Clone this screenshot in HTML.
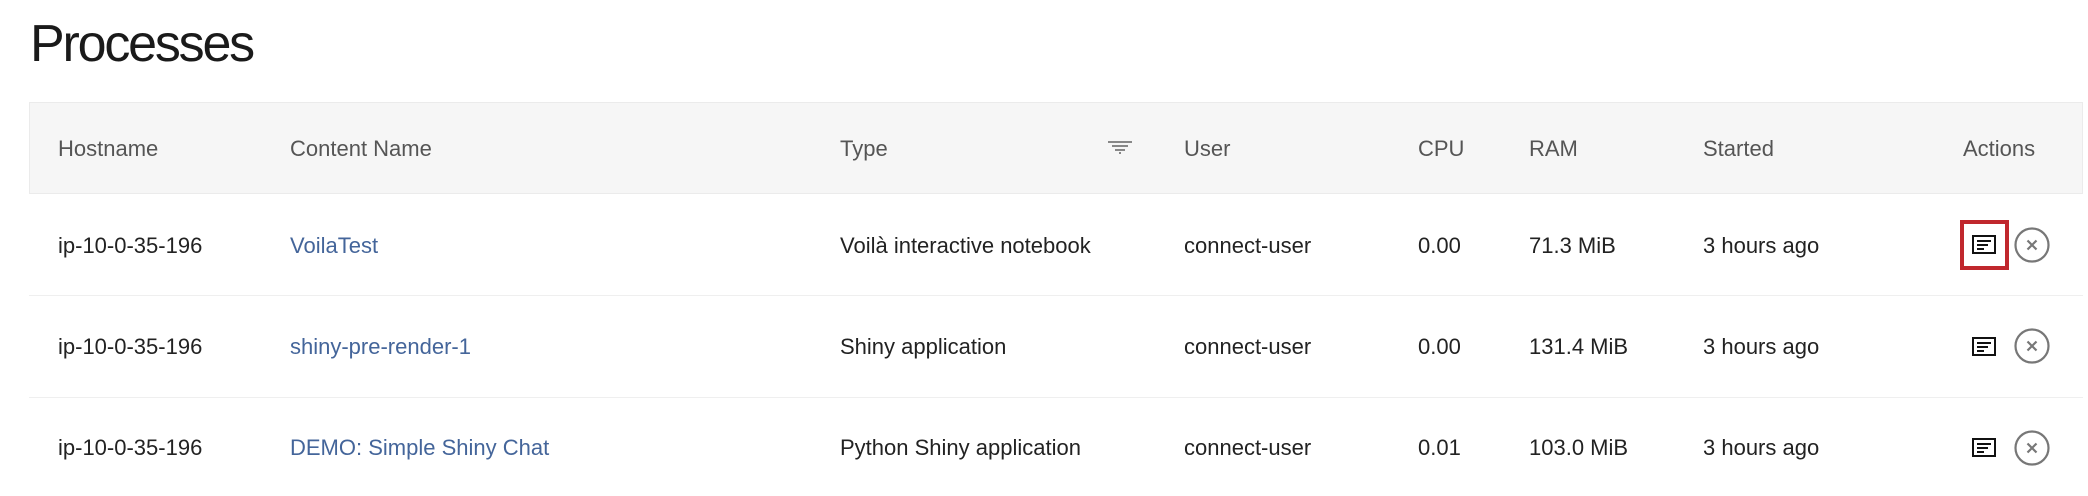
<!DOCTYPE html>
<html><head><meta charset="utf-8"><style>
body{margin:0;width:2088px;height:496px;background:#fff;position:relative;overflow:hidden;font-family:"Liberation Sans",sans-serif;}
.t{position:absolute;white-space:nowrap;font-size:22px;line-height:24px;color:#222;}
.h{color:#555;}
.l{color:#44659a;}
.title{position:absolute;left:30px;top:12px;font-size:52px;line-height:64px;letter-spacing:-2.2px;color:#1a1a1a;}
.hdr{position:absolute;left:29px;top:102px;width:2054px;height:92px;background:#f6f6f6;border:1px solid #ebebeb;box-sizing:border-box;}
.line{position:absolute;left:29px;width:2054px;height:1px;background:#efefef;}
</style></head><body>
<div class="title">Processes</div>
<div class="hdr"></div>
<div class="line" style="top:295px"></div>
<div class="line" style="top:397px"></div>

<div class="t h" style="left:58px;top:137px">Hostname</div>
<div class="t h" style="left:290px;top:137px">Content Name</div>
<div class="t h" style="left:840px;top:137px">Type</div>
<svg style="position:absolute;left:1106px;top:139px" width="28" height="16"><g fill="#888"><rect x="2" y="2" width="24" height="2"/><rect x="6" y="6" width="16" height="2"/><rect x="9" y="10" width="10" height="2"/><rect x="13" y="13" width="2" height="2"/></g></svg>
<div class="t h" style="left:1184px;top:137px">User</div>
<div class="t h" style="left:1418px;top:137px">CPU</div>
<div class="t h" style="left:1529px;top:137px">RAM</div>
<div class="t h" style="left:1703px;top:137px">Started</div>
<div class="t h" style="left:1963px;top:137px">Actions</div>

<div class="t" style="left:58px;top:234px">ip-10-0-35-196</div>
<div class="t l" style="left:290px;top:234px">VoilaTest</div>
<div class="t" style="left:840px;top:234px">Voilà interactive notebook</div>
<div class="t" style="left:1184px;top:234px">connect-user</div>
<div class="t" style="left:1418px;top:234px">0.00</div>
<div class="t" style="left:1529px;top:234px">71.3 MiB</div>
<div class="t" style="left:1703px;top:234px">3 hours ago</div>

<div class="t" style="left:58px;top:335px">ip-10-0-35-196</div>
<div class="t l" style="left:290px;top:335px">shiny-pre-render-1</div>
<div class="t" style="left:840px;top:335px">Shiny application</div>
<div class="t" style="left:1184px;top:335px">connect-user</div>
<div class="t" style="left:1418px;top:335px">0.00</div>
<div class="t" style="left:1529px;top:335px">131.4 MiB</div>
<div class="t" style="left:1703px;top:335px">3 hours ago</div>

<div class="t" style="left:58px;top:436px">ip-10-0-35-196</div>
<div class="t l" style="left:290px;top:436px">DEMO: Simple Shiny Chat</div>
<div class="t" style="left:840px;top:436px">Python Shiny application</div>
<div class="t" style="left:1184px;top:436px">connect-user</div>
<div class="t" style="left:1418px;top:436px">0.01</div>
<div class="t" style="left:1529px;top:436px">103.0 MiB</div>
<div class="t" style="left:1703px;top:436px">3 hours ago</div>

<div style="position:absolute;left:1960px;top:220px;width:49px;height:50px;border:4px solid #c0272d;box-sizing:border-box"></div>
<svg style="position:absolute;left:0;top:0" width="2088" height="496">
<g fill="none" stroke="#111" stroke-width="2">
<rect x="1973" y="236" width="22" height="17"/>
<rect x="1973" y="338" width="22" height="17"/>
<rect x="1973" y="439" width="22" height="17"/>
</g>
<g fill="#111">
<rect x="1977" y="240" width="14" height="2"/><rect x="1977" y="244" width="11" height="2"/><rect x="1977" y="248" width="7" height="2"/>
<rect x="1977" y="342" width="14" height="2"/><rect x="1977" y="346" width="11" height="2"/><rect x="1977" y="350" width="7" height="2"/>
<rect x="1977" y="443" width="14" height="2"/><rect x="1977" y="447" width="11" height="2"/><rect x="1977" y="451" width="7" height="2"/>
</g>
<g fill="none" stroke="#777" stroke-width="2.2">
<circle cx="2032" cy="245" r="16.5"/><path d="M2027.5 240.5l9 9M2036.5 240.5l-9 9"/>
<circle cx="2032" cy="346" r="16.5"/><path d="M2027.5 341.5l9 9M2036.5 341.5l-9 9"/>
<circle cx="2032" cy="448" r="16.5"/><path d="M2027.5 443.5l9 9M2036.5 443.5l-9 9"/>
</g>
</svg>
</body></html>
